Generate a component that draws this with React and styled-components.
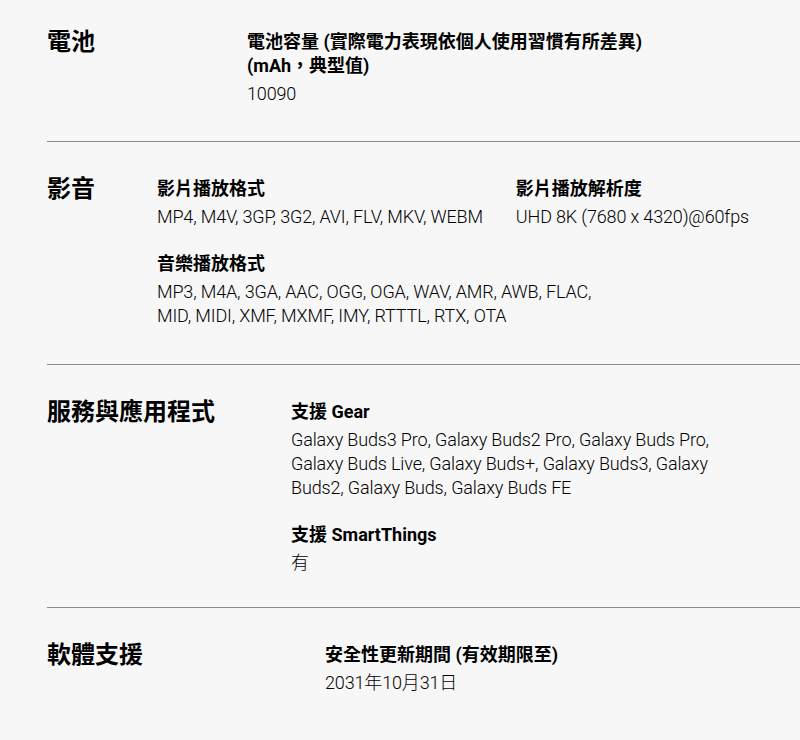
import React from "react";
import styled, { createGlobalStyle } from "styled-components";

const Global = createGlobalStyle`
  html, body { margin: 0; padding: 0; background: #f7f7f7; }
  body {
    font-family: Roboto, "Noto Sans CJK TC", sans-serif;
    color: #000;
  }
`;

const Page = styled.div`
  padding-left: 47px;
  background: #f7f7f7;
  min-height: 740px;
`;

const Section = styled.section`
  display: flex;
  align-items: flex-start;
  padding: ${(p) => p.$top}px 0 ${(p) => p.$bottom}px;
  border-bottom: ${(p) => (p.$last ? "none" : "1px solid #8c8c8c")};
`;

const Heading = styled.h2`
  flex: 0 0 ${(p) => p.$col}px;
  margin: 0;
  font-size: 24px;
  line-height: 24px;
  font-weight: 700;
  color: #000;
`;

const Items = styled.div`
  flex: 1;
  display: flex;
  flex-wrap: wrap;
  column-gap: 33px;
  row-gap: 23px;
`;

const Item = styled.div`
  max-width: 460px;
  flex-basis: ${(p) => (p.$full ? "100%" : "auto")};
`;

const Label = styled.div`
  font-size: 18px;
  line-height: 24px;
  font-weight: 700;
  color: #000;
`;

const Value = styled.div`
  margin-top: 4px;
  font-size: 18px;
  line-height: 24px;
  font-weight: 300;
  letter-spacing: -0.15px;
  color: #000;
`;

const sections = [
  {
    title: "電池",
    col: 200,
    top: 30,
    bottom: 35,
    items: [
      { label: "電池容量 (實際電力表現依個人使用習慣有所差異) (mAh，典型值)", value: "10090" },
    ],
  },
  {
    title: "影音",
    col: 110,
    top: 35,
    bottom: 36,
    items: [
      { label: "影片播放格式", value: "MP4, M4V, 3GP, 3G2, AVI, FLV, MKV, WEBM" },
      { label: "影片播放解析度", value: "UHD 8K (7680 x 4320)@60fps" },
      {
        label: "音樂播放格式",
        value: "MP3, M4A, 3GA, AAC, OGG, OGA, WAV, AMR, AWB, FLAC, MID, MIDI, XMF, MXMF, IMY, RTTTL, RTX, OTA",
      },
    ],
  },
  {
    title: "服務與應用程式",
    col: 244,
    top: 35,
    bottom: 32,
    items: [
      {
        label: "支援 Gear",
        value:
          "Galaxy Buds3 Pro, Galaxy Buds2 Pro, Galaxy Buds Pro, Galaxy Buds Live, Galaxy Buds+, Galaxy Buds3, Galaxy Buds2, Galaxy Buds, Galaxy Buds FE",
      },
      { label: "支援 SmartThings", value: "有", full: true },
    ],
  },
  {
    title: "軟體支援",
    col: 278,
    top: 35,
    bottom: 35,
    items: [{ label: "安全性更新期間 (有效期限至)", value: "2031年10月31日" }],
  },
];

export default function App() {
  return (
    <Page>
      <Global />
      {sections.map((s, i) => (
        <Section key={s.title} $top={s.top} $bottom={s.bottom} $last={i === sections.length - 1}>
          <Heading $col={s.col}>{s.title}</Heading>
          <Items>
            {s.items.map((it) => (
              <Item key={it.label} $full={it.full}>
                <Label>{it.label}</Label>
                <Value>{it.value}</Value>
              </Item>
            ))}
          </Items>
        </Section>
      ))}
    </Page>
  );
}
